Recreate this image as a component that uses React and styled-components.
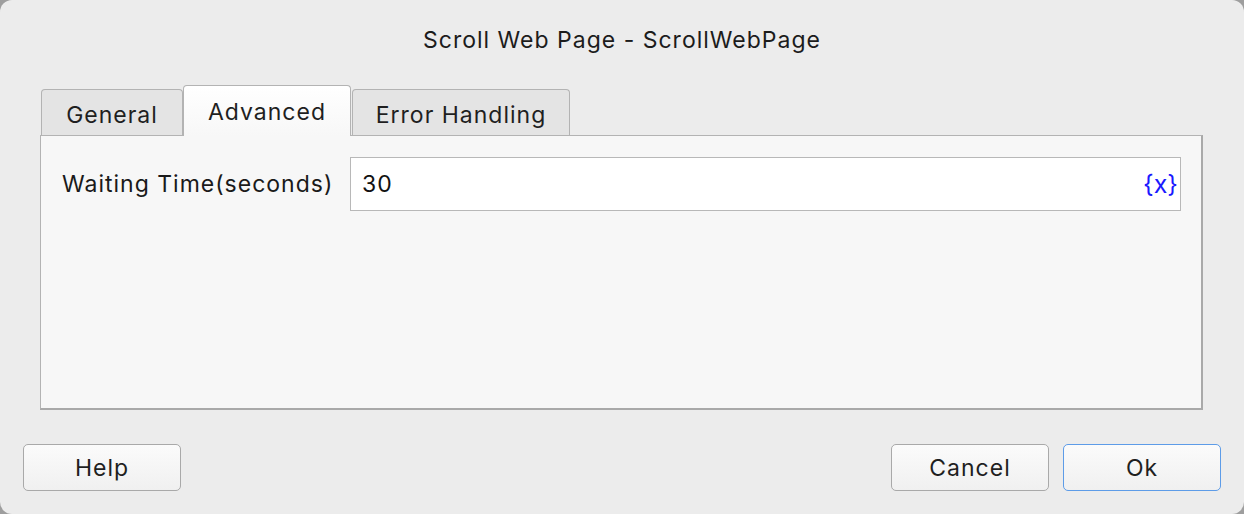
import React from "react";
import styled, { createGlobalStyle } from "styled-components";

const GlobalStyle = createGlobalStyle`
  html, body {
    margin: 0;
    padding: 0;
    background: #9e9e9e;
  }
  body {
    font-family: Inter, "Liberation Sans", Arial, sans-serif;
    color: #222;
  }
`;

const tabs = [
  { label: "General", width: 142 },
  { label: "Advanced", width: 168, active: true },
  { label: "Error Handling", width: 218 },
];

const App = () => {
  return (
    <>
      <GlobalStyle />
      <Window>
        <Title>Scroll Web Page - ScrollWebPage</Title>
        <TabBar>
          {tabs.map((tab) => (
            <Tab key={tab.label} $active={tab.active} $width={tab.width}>
              {tab.label}
            </Tab>
          ))}
        </TabBar>
        <Panel>
          <FieldRow>
            <Label>Waiting Time(seconds)</Label>
            <InputBox>
              <Value>30</Value>
              <VarButton>{"{x}"}</VarButton>
            </InputBox>
          </FieldRow>
        </Panel>
        <Footer>
          <Button>Help</Button>
          <ButtonGroup>
            <Button>Cancel</Button>
            <Button $primary>Ok</Button>
          </ButtonGroup>
        </Footer>
      </Window>
    </>
  );
};

const Window = styled.div`
  width: 1244px;
  height: 514px;
  box-sizing: border-box;
  background: #ececec;
  border-radius: 12px;
  overflow: hidden;
  display: flex;
  flex-direction: column;
  font-size: 23px;
  letter-spacing: 1px;
`;

const Title = styled.div`
  height: 84px;
  padding-top: 26px;
  box-sizing: border-box;
  text-align: center;
  color: #1c1c1c;
`;

const TabBar = styled.div`
  display: flex;
  align-items: flex-end;
  height: 51px;
  padding-left: 41px;
`;

const Tab = styled.div`
  width: ${(p) => p.$width}px;
  height: ${(p) => (p.$active ? 51 : 46)}px;
  box-sizing: border-box;
  display: flex;
  align-items: center;
  justify-content: center;
  padding-top: ${(p) => (p.$active ? 1 : 4)}px;
  color: #1f1f1f;
  background: ${(p) =>
    p.$active ? "linear-gradient(#ffffff, #f7f7f7)" : "#e4e4e4"};
  border: 1px solid #b3b3b3;
  border-bottom: none;
  border-radius: 4px 4px 0 0;
  margin-right: ${(p) => (p.$active ? 1 : 0)}px;
  position: relative;
  z-index: ${(p) => (p.$active ? 1 : 0)};
  margin-bottom: ${(p) => (p.$active ? -1 : 0)}px;
`;

const Panel = styled.div`
  margin: 0 41px 0 40px;
  height: 275px;
  box-sizing: border-box;
  background: #f7f7f7;
  border-top: 1px solid #b3b3b3;
  border-left: 1px solid #b3b3b3;
  border-right: 2px solid #a9a9a9;
  border-bottom: 2px solid #a9a9a9;
  padding: 21px 20px 0 21px;
`;

const FieldRow = styled.div`
  display: flex;
  align-items: center;
`;

const Label = styled.div`
  width: 288px;
  color: #1a1a1a;
`;

const InputBox = styled.div`
  flex: 1;
  height: 54px;
  box-sizing: border-box;
  background: #ffffff;
  border: 1px solid #b8b8b8;
  display: flex;
  align-items: center;
  justify-content: space-between;
  padding: 0 2px 0 11px;
`;

const Value = styled.span`
  color: #111;
`;

const VarButton = styled.span`
  color: #1a1aff;
  font-size: 25px;
  letter-spacing: 0;
`;

const Footer = styled.div`
  display: flex;
  justify-content: space-between;
  padding: 34px 23px 0 23px;
`;

const ButtonGroup = styled.div`
  display: flex;
  gap: 14px;
`;

const Button = styled.button`
  width: 158px;
  height: 47px;
  box-sizing: border-box;
  font-family: Inter, "Liberation Sans", Arial, sans-serif;
  font-size: 23px;
  letter-spacing: 1px;
  color: #1f1f1f;
  background: linear-gradient(#fbfbfb, #f0f0f0);
  border: 1.5px solid ${(p) => (p.$primary ? "#5d9ce8" : "#a9a9a9")};
  border-radius: 5px;
  padding: 0;
`;

export default App;
